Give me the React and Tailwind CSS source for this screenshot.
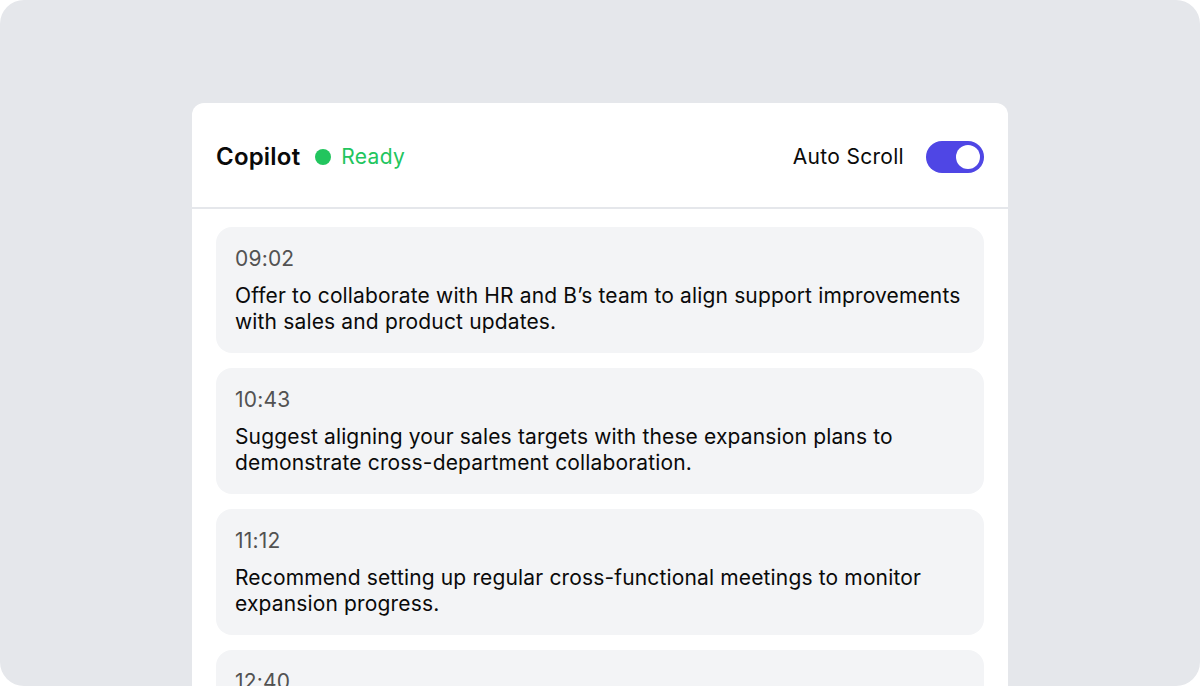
export default function App() {
  const items = [
    { t: "09:02", m: "Offer to collaborate with HR and B’s team to align support improvements with sales and product updates." },
    { t: "10:43", m: "Suggest aligning your sales targets with these expansion plans to demonstrate cross-department collaboration." },
    { t: "11:12", m: "Recommend setting up regular cross-functional meetings to monitor expansion progress." },
    { t: "12:40", m: "Propose a shared dashboard so every team can follow the rollout and surface blockers early." },
  ];
  return (
    <div className="w-[1200px] h-[686px] bg-white" style={{ fontFamily: "Inter, 'Noto Sans', sans-serif" }}>
      <div className="w-full h-full bg-[#e5e7eb] rounded-3xl overflow-hidden flex justify-center pt-[103px]">
        <div className="w-[816px] bg-white rounded-t-xl flex flex-col self-start">
          <div className="h-[106px] pt-[3px] px-6 flex items-center justify-between border-b-2 border-[#e5e7eb]">
            <div className="flex items-center">
              <span className="text-[24px] tracking-[0.2px] font-semibold text-[#0a0a0a]">Copilot</span>
              <span className="ml-[15px] w-4 h-4 rounded-full bg-[#22c55e]"></span>
              <span className="ml-[10px] text-[21px] tracking-[0.3px] text-[#22c55e]">Ready</span>
            </div>
            <div className="flex items-center">
              <span className="text-[21px] tracking-[0.3px] text-[#0a0a0a]">Auto Scroll</span>
              <div className="ml-[22px] w-[58px] h-8 rounded-full bg-[#4f46e5] flex items-center justify-end pr-1">
                <div className="w-6 h-6 rounded-full bg-white"></div>
              </div>
            </div>
          </div>
          <div className="px-6 pt-[18px] flex flex-col gap-[15px]">
            {items.map((it) => (
              <div key={it.t} className="bg-[#f3f4f6] rounded-2xl px-[19px] pt-[20px] pb-[18px]">
                <div className="text-[21px] tracking-[0.2px] leading-6 text-[#525252]">{it.t}</div>
                <div className="mt-3 text-[21px] tracking-[0.15px] leading-[26px] text-[#0a0a0a]">{it.m}</div>
              </div>
            ))}
          </div>
        </div>
      </div>
    </div>
  );
}
